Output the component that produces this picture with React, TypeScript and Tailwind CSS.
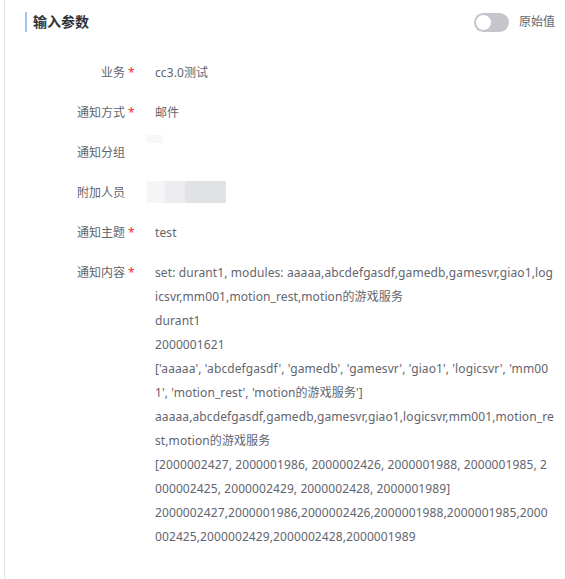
const rows = [
  { label: "业务", required: true, value: ["cc3.0测试"] },
  { label: "通知方式", required: true, value: ["邮件"] },
  { label: "通知分组", required: false, value: [], blur: "small" },
  { label: "附加人员", required: false, value: [], blur: "wide" },
  { label: "通知主题", required: true, value: ["test"] },
  {
    label: "通知内容",
    required: true,
    value: [
      "set: durant1, modules: aaaaa,abcdefgasdf,gamedb,gamesvr,giao1,log",
      "icsvr,mm001,motion_rest,motion的游戏服务",
      "durant1",
      "2000001621",
      "['aaaaa', 'abcdefgasdf', 'gamedb', 'gamesvr', 'giao1', 'logicsvr', 'mm00",
      "1', 'motion_rest', 'motion的游戏服务']",
      "aaaaa,abcdefgasdf,gamedb,gamesvr,giao1,logicsvr,mm001,motion_re",
      "st,motion的游戏服务",
      "[2000002427, 2000001986, 2000002426, 2000001988, 2000001985, 2",
      "000002425, 2000002429, 2000002428, 2000001989]",
      "2000002427,2000001986,2000002426,2000001988,2000001985,2000",
      "002425,2000002429,2000002428,2000001989",
    ],
  },
]

export default function App() {
  return (
    <div className="h-[579px] w-full bg-white pl-[4px] font-['Noto_Sans','Noto_Sans_CJK_SC',sans-serif] text-[12px] text-[#63656e]">
      <div className="h-full border-l border-[#e3e4e8] pl-[20px] pr-[10px] pt-[12px]">
        <div className="flex items-center justify-between">
          <div className="border-l-2 border-[#a3c4f3] pl-[6px] text-[14px] leading-[20px] font-bold text-[#313238]">
            输入参数
          </div>
          <div className="flex items-center">
            <div className="relative h-[19px] w-[35px] rounded-full bg-[#c4c6cc]">
              <div className="absolute left-[2px] top-[2px] h-[15px] w-[15px] rounded-full bg-white" />
            </div>
            <span className="ml-[10px] leading-[20px]">原始值</span>
          </div>
        </div>

        <div className="mt-[29px]">
          {rows.map((row) => (
            <div key={row.label} className="mb-[16px] flex leading-[24px]">
              <div className="w-[100px] shrink-0 text-right">{row.label}</div>
              <div className="w-[30px] shrink-0 pl-[3px] text-[#ea3636]">{row.required ? "*" : ""}</div>
              <div className="flex-1 tracking-[0.1px]">
                {row.value.map((line, i) => (
                  <div key={i} className="whitespace-nowrap">{line}</div>
                ))}
                {row.blur === "small" && (
                  <div className="h-[24px]">
                    <div className="ml-[-8px] mt-[-6px] h-[8px] w-[16px] bg-[#f7f7f8]" />
                  </div>
                )}
                {row.blur === "wide" && (
                  <div className="ml-[-8px] flex h-[22px] w-[79px]">
                    <div className="w-[18px] bg-[#f4f5f6]" />
                    <div className="w-[20px] bg-[#ececee]" />
                    <div className="flex-1 bg-[#e1e2e5]" />
                  </div>
                )}
              </div>
            </div>
          ))}
        </div>
      </div>
    </div>
  )
}
